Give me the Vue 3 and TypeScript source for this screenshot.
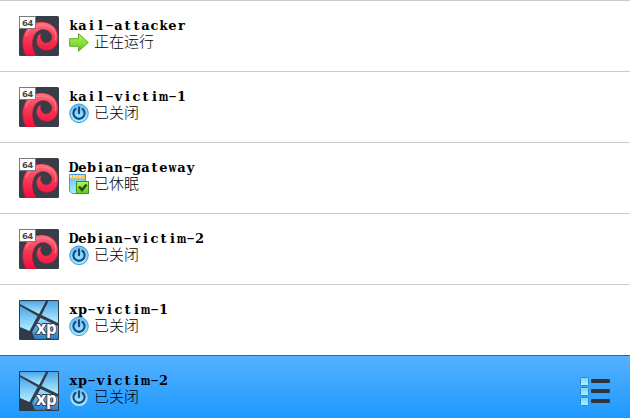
<script setup lang="ts">
type Os = 'debian' | 'xp'
type State = 'running' | 'off' | 'saved'
interface Machine { name: string; os: Os; state: State; selected?: boolean }

const labels: Record<State, string> = { running: '正在运行', off: '已关闭', saved: '已休眠' }
const machines: Machine[] = [
  { name: 'kail-attacker', os: 'debian', state: 'running' },
  { name: 'kail-victim-1', os: 'debian', state: 'off' },
  { name: 'Debian-gateway', os: 'debian', state: 'saved' },
  { name: 'Debian-victim-2', os: 'debian', state: 'off' },
  { name: 'xp-victim-1', os: 'xp', state: 'off' },
  { name: 'xp-victim-2', os: 'xp', state: 'off', selected: true },
]

// Wide glyphs are condensed and hyphens stretched so that each fits a fixed cell.
function glyphClass(c: string): string {
  if (c === 'm' || c === 'w') return 'wide'
  if (c === 'D' || c === 'k' || c === 'n') return 'broad'
  return c === '-' ? 'dash' : ''
}
</script>

<template>
  <main class="list">
    <svg class="defs" width="0" height="0">
      <defs>
        <linearGradient id="red" x1="0" y1="0" x2="0" y2="1"><stop offset="0" stop-color="#ff7080" /><stop offset=".45" stop-color="#f63c55" /><stop offset="1" stop-color="#f50a3c" /></linearGradient>
        <linearGradient id="sky" x1="0" y1="0" x2="0" y2="1"><stop offset="0" stop-color="#a5e6ff" /><stop offset=".5" stop-color="#5aaeea" /><stop offset="1" stop-color="#2a78c8" /></linearGradient>
        <linearGradient id="pane" x1="0" y1="0" x2="0" y2="1"><stop offset="0" stop-color="#4ba6e8" /><stop offset="1" stop-color="#b4eeff" /></linearGradient>
        <linearGradient id="green" x1="0" y1="0" x2="0" y2="1"><stop offset="0" stop-color="#b5f65a" /><stop offset="1" stop-color="#5ccb18" /></linearGradient>
        <linearGradient id="aqua" x1="0" y1="0" x2="0" y2="1"><stop offset="0" stop-color="#68bff5" /><stop offset="1" stop-color="#a5f0ff" /></linearGradient>
        <linearGradient id="tile" x1="0" y1="0" x2="0" y2="1"><stop offset="0" stop-color="#74d5ff" /><stop offset="1" stop-color="#b0f1ff" /></linearGradient>
      </defs>
    </svg>
    <article v-for="m in machines" :key="m.name" class="row" :class="{ selected: m.selected }">
      <svg v-if="m.os === 'debian'" class="os" viewBox="0 0 40 40">
        <rect width="40" height="40" rx="1.5" fill="#383d48" />
        <path d="M7 40C1 29 3 14 13 8.5C23 3 35 7 38 16C41.5 26 36 34.5 28 34.5C20 34.5 15.5 27 18.5 21C19.3 19 20.5 18 22.2 17.8C20.3 22 23 27 27.5 26.8C32.5 26.5 34 21 31.8 17.5C28 12 20 12 16 18C12 25 13 34 17.5 40Z" fill="url(#red)" stroke="#a81c38" stroke-width=".5" />
        <path d="M7 20C9 10 22 7 30 10.5C37 14 38 20 36 24" fill="none" stroke="#ff98a4" stroke-width="1.2" opacity=".55" />
        <rect x=".5" y=".5" width="16" height="12" fill="#fff" stroke="#777b80" />
        <text x="8.6" y="9.8" class="bits">64</text>
      </svg>
      <svg v-else class="os" viewBox="0 0 40 40">
        <rect width="40" height="40" rx="1" fill="#303b49" />
        <path d="M1 1H27L20 14L1 4Z" fill="url(#pane)" />
        <path d="M29.5 1H39V23L22.5 15Z" fill="url(#pane)" />
        <path d="M1 6L18.5 16L10.5 31L1 27Z" fill="url(#pane)" />
        <path d="M21.5 18L39 26V39H16L13 32Z" fill="url(#sky)" />
        <text x="27.5" y="34" class="xp">xp</text>
      </svg>
      <div class="info">
        <h2><span v-for="(c, i) in m.name" :key="i" class="glyph" :class="glyphClass(c)">{{ c }}</span></h2>
        <div class="status">
          <svg v-if="m.state === 'running'" viewBox="0 0 20 20">
            <path d="M.6 6.7H9.5V1.5L19.3 10.5L9.5 19.3V14.3H.6Z" fill="url(#green)" stroke="#5fae2c" stroke-linejoin="round" />
          </svg>
          <svg v-else-if="m.state === 'off'" viewBox="0 0 20 20">
            <circle cx="10" cy="10.3" r="9.3" fill="url(#aqua)" stroke="#4499cf" />
            <path d="M6.5 5.9A5.6 5.6 0 1 0 13.5 5.9M10 4.3V10.3" fill="none" stroke="#1d477e" stroke-width="2.1" stroke-linecap="round" />
          </svg>
          <svg v-else viewBox="0 0 20 20">
            <path d="M.5 .5H16.5V19.5H3L.5 17Z" fill="url(#aqua)" stroke="#4499cf" />
            <path d="M1 1H16V4H1Z" fill="#fff3cc" />
            <path d="M3.5 1V5M6.5 1V5M9.5 1V5M12.5 1V5M15.2 1V5" stroke="#ffb72e" stroke-width="1.7" />
            <rect x="7.5" y="7.5" width="12" height="12" fill="url(#green)" stroke="#438b20" />
            <path d="M10 12.5L13 16L17.5 10.5" fill="none" stroke="#24511b" stroke-width="2.6" />
          </svg>
          <span>{{ labels[m.state] }}</span>
        </div>
      </div>
      <svg v-if="m.selected" class="menu" viewBox="0 0 32 32">
        <g v-for="y in [2, 12, 22]" :key="y">
          <rect x="1.5" :y="y + .5" width="8" height="8" rx="1" fill="url(#tile)" stroke="#3187cc" />
          <rect x="12" :y="y + 2" width="19" height="4" rx="1.3" fill="#303438" />
        </g>
      </svg>
    </article>
  </main>
</template>

<style>
body { margin: 0; background: #fff; overflow: hidden; }
</style>

<style scoped>
.list { height: 418px; overflow: hidden; font-family: "DejaVu Serif", "Noto Sans CJK SC", serif; color: #000; }
.defs { display: block; }
.row { box-sizing: border-box; height: 71px; display: flex; align-items: flex-start; padding: 15px 19px 0; border-top: 1px solid #cbcbcb; }
.selected { border-color: #0b70b7; background: linear-gradient(#55b1ff, #1d99ff 62px); }
.os { width: 40px; height: 40px; flex: none; }
.bits { font: bold 9.5px "Open Sans", sans-serif; text-anchor: middle; fill: #444; }
.xp { font: bold 17px "Open Sans", sans-serif; text-anchor: middle; fill: #fff; stroke: #344656; stroke-width: 2px; paint-order: stroke; }
.info { margin-left: 10px; flex: 1; }
h2 { margin: 0; padding-top: 1px; height: 15px; font-size: 13px; line-height: 17px; font-weight: bold; display: flex; }
.glyph { width: 9px; display: flex; justify-content: center; }
.wide { transform: scaleX(.7); }
.broad { transform: scaleX(.9); }
.dash { transform: scale(1.6, .65); }
.status { display: flex; height: 20px; gap: 5px; }
.status svg { width: 20px; height: 20px; }
.status span { font: 15px/20px "Liberation Sans", "Noto Sans CJK SC", sans-serif; font-weight: 300; }
.menu { width: 32px; height: 32px; margin: 4px 0 0; }
</style>
